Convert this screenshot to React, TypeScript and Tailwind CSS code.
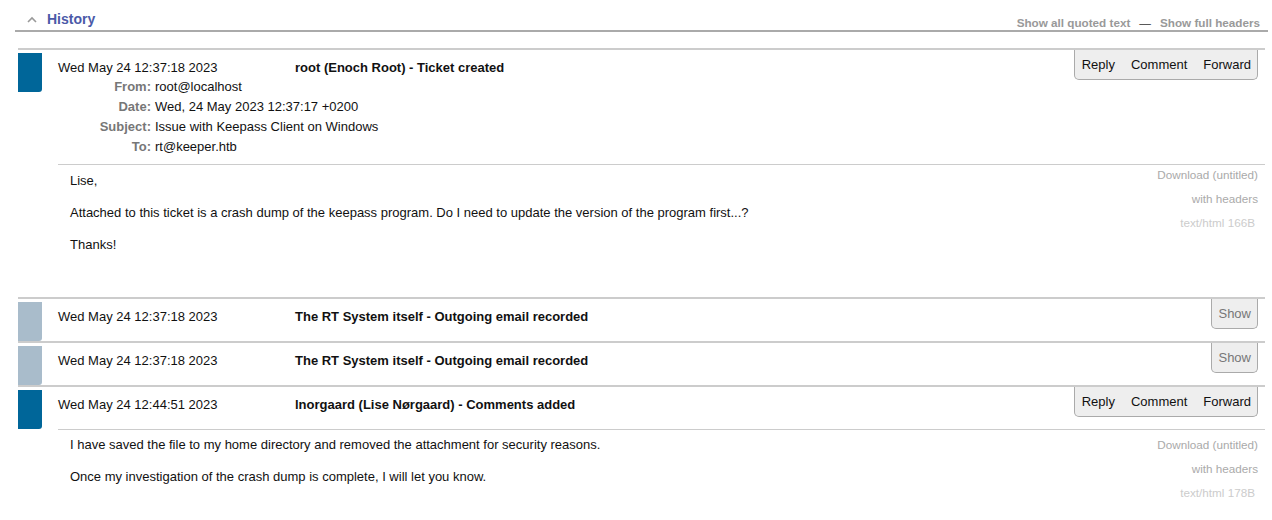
import React from 'react'

// ── Ticket history data ─────────────────────────────
type Txn = {
  date: string
  desc: string
  kind: 'message' | 'system'
  headers?: [string, string][]
  body?: string[]
  attachment?: string
  infoClass?: string
  bodyClass?: string
  textClass?: string
}

const history: Txn[] = [
  {
    date: 'Wed May 24 12:37:18 2023',
    desc: 'root (Enoch Root) - Ticket created',
    kind: 'message',
    headers: [
      ['From:', 'root@localhost'],
      ['Date:', 'Wed, 24 May 2023 12:37:17 +0200'],
      ['Subject:', 'Issue with Keepass Client on Windows'],
      ['To:', 'rt@keeper.htb'],
    ],
    body: [
      'Lise,',
      'Attached to this ticket is a crash dump of the keepass program. Do I need to update the version of the program first...?',
      'Thanks!',
    ],
    attachment: 'text/html 166B',
    infoClass: 'pt-[3px]',
    bodyClass: 'min-h-[133px]',
    textClass: 'pt-[8px]',
  },
  {
    date: 'Wed May 24 12:37:18 2023',
    desc: 'The RT System itself - Outgoing email recorded',
    kind: 'system',
  },
  {
    date: 'Wed May 24 12:37:18 2023',
    desc: 'The RT System itself - Outgoing email recorded',
    kind: 'system',
  },
  {
    date: 'Wed May 24 12:44:51 2023',
    desc: 'lnorgaard (Lise Nørgaard) - Comments added',
    kind: 'message',
    body: [
      'I have saved the file to my home directory and removed the attachment for security reasons.',
      'Once my investigation of the crash dump is complete, I will let you know.',
    ],
    attachment: 'text/html 178B',
    infoClass: 'pt-[8px]',
    bodyClass: 'min-h-[90px]',
    textClass: 'pt-[7px]',
  },
]

function Transaction({ t }: { t: Txn }) {
  const system = t.kind === 'system'
  return (
    <div className="flex border-t-2 border-[#cccccc]">
      <div
        className={
          'mt-[3px] h-[39px] w-[24px] shrink-0 rounded-br-[3px] ' +
          (system ? 'bg-[#a9bccb]' : 'bg-[#006699]')
        }
      />
      <div className="ml-[16px] flex-1">
        {/* top: date, description, headers, actions */}
        <div className="flex min-h-[42px] items-start justify-between">
          <div className={'pt-[8px] ' + (t.headers ? 'pb-[8px]' : '')}>
            <div className="flex h-[18px] items-center leading-[15px]">
              <span className="w-[237px] shrink-0 text-[#111]">{t.date}</span>
              <span className="font-bold text-[#111]">{t.desc}</span>
            </div>
            {t.headers?.map(([k, v]) => (
              <div key={k} className="flex h-[20px] items-center leading-[15px]">
                <span className="w-[93px] shrink-0 text-right font-bold text-[#777]">{k}</span>
                <span className="ml-[4px] text-[#111]">{v}</span>
              </div>
            ))}
          </div>
          {system ? (
            <div className="mr-[7px] rounded-b-[5px] border border-t-0 border-[#aaaaaa] bg-[#eeeeee] pb-[7px] pl-[6px] pr-[6px] pt-[7px] leading-[15px] text-[#777]">
              Show
            </div>
          ) : (
            <div className="mr-[7px] flex gap-4 rounded-b-[5px] border border-t-0 border-[#aaaaaa] bg-[#eeeeee] pb-[7px] pl-[7px] pr-[6px] pt-[7px] leading-[15px] text-[#111]">
              <span>Reply</span>
              <span>Comment</span>
              <span>Forward</span>
            </div>
          )}
        </div>

        {/* message body */}
        {t.body && (
          <div className={'flex justify-between border-t border-[#cccccc] ' + (t.bodyClass ?? '')}>
            <div className={'pl-[12px] leading-[16px] text-[#111] ' + (t.textClass ?? '')}>
              {t.body.map((line, i) => (
                <p key={i} className="mb-[16px]">
                  {line}
                </p>
              ))}
            </div>
            <div className={'flex flex-col items-end gap-[10px] pr-[7px] text-[11.7px] leading-[14px] ' + (t.infoClass ?? '')}>
              <span className="text-[#aaaaaa]">Download (untitled)</span>
              <span className="text-[#aaaaaa]">with headers</span>
              <span className="pr-[3px] text-[#cccccc]">{t.attachment}</span>
            </div>
          </div>
        )}
      </div>
    </div>
  )
}

export default function App() {
  return (
    <div
      className="h-[520px] w-[1272px] overflow-hidden bg-white text-[13px]"
      style={{ fontFamily: '"Liberation Sans", Arial, sans-serif' }}
    >
      {/* section header */}
      <div className="ml-[15px] flex w-[1253px] items-end justify-between border-b-2 border-[#aaaaaa] pt-[11px]">
        <div className="flex items-center pb-[3px] pl-[12px]">
          <svg width="10" height="7" viewBox="0 0 10 7" className="mr-[10px]">
            <polyline points="1,6 5,2 9,6" fill="none" stroke="#999999" strokeWidth="1.6" />
          </svg>
          <span className="text-[14px] font-bold leading-[16px] text-[#4b5aa8]">History</span>
        </div>
        <div className="flex items-center pb-[1px] pr-[8px] text-[11.7px] font-bold leading-[13px]">
          <span className="text-[#999999]">Show all quoted text</span>
          <span className="mx-[9px] font-normal text-[#333]">—</span>
          <span className="text-[#999999]">Show full headers</span>
        </div>
      </div>

      {/* transactions */}
      <div className="ml-[18px] mt-[16px] w-[1247px]">
        {history.map((t, i) => (
          <Transaction key={i} t={t} />
        ))}
      </div>
    </div>
  )
}
